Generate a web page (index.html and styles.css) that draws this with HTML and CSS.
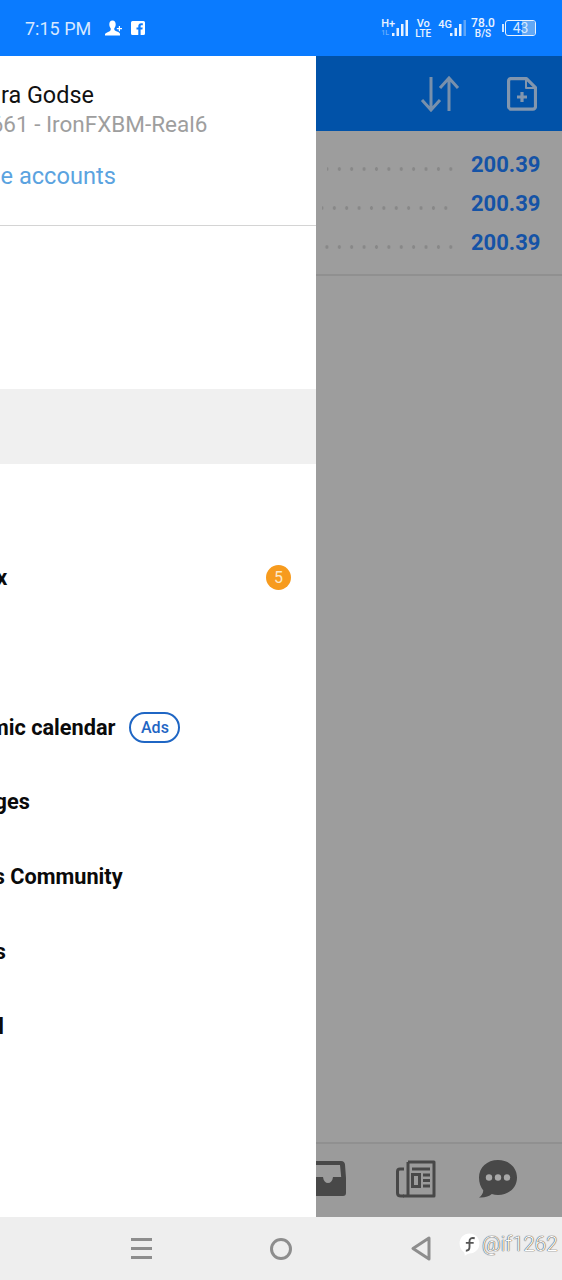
FILE: index.html
```html
<!DOCTYPE html>
<html lang="en">
<head>
  <meta charset="UTF-8">
  <meta name="viewport" content="width=device-width, initial-scale=1">
  <title>Accounts menu</title>
  <link rel="stylesheet" href="styles.css">
</head>
<body>
  <div class="screen">
    <!-- Status bar -->
    <header class="status-bar">
      <div class="status-left">
        <span class="clock">7:15 PM</span>
        <svg class="person-icon" viewBox="0 0 18 16" width="18" height="16">
          <path fill="#fff" d="M7.500 0.500c2 0 3.200 1.600 3.200 3.800 0 1.700-.6 3.100-1.400 4v1.400c0 .8 2.400 1.500 4 2.200 1 .5 1.700 1.200 1.700 2v1.600H0v-1.300c.5-1 1.500-1.500 2.500-2 1.500-.6 3.200-1.200 3.200-2.500V8.300c-.8-.9-1.400-2.300-1.400-4 0-2.200 1.200-3.800 3.200-3.800z"/>
          <path fill="#fff" d="M13.800 6h1.200v2h2v1.200h-2v2h-1.200v-2h-2V8h2z"/>
        </svg>
        <svg class="fb-icon" viewBox="0 0 14 14" width="14" height="14">
          <path fill="#fff" fill-rule="evenodd" d="M1.500 0h11A1.500 1.500 0 0 1 14 1.500v11a1.500 1.500 0 0 1-1.500 1.500H9.600V8.600h1.800l.3-2.100H9.600V5.200c0-.6.2-1 1-1h1.200V2.300c-.3 0-.9-.1-1.700-.1-1.700 0-2.800 1-2.800 2.900v1.400H5.500v2.100h1.800V14H1.500A1.500 1.500 0 0 1 0 12.500v-11A1.500 1.500 0 0 1 1.500 0z"/>
        </svg>
      </div>
      <div class="status-right">
        <div class="net net-h">
          <span class="net-top">H+</span>
          <span class="net-sub">1L</span>
        </div>
        <svg class="bars bars-first" viewBox="0 0 16 18" width="16" height="18">
          <rect x="0" y="14" width="2.500" height="3" fill="#e8f2ff"/>
          <rect x="4.500" y="9" width="2.500" height="8" fill="#e8f2ff"/>
          <rect x="9" y="5" width="2.500" height="12" fill="#e8f2ff"/>
          <rect x="13.500" y="1" width="2.500" height="16" fill="#e8f2ff"/>
        </svg>
        <div class="net net-vo">
          <span class="net-top">Vo</span>
          <span class="net-low">LTE</span>
        </div>
        <span class="net-4g">4G</span>
        <svg class="bars" viewBox="0 0 16 18" width="16" height="18">
          <rect x="0" y="14" width="2.500" height="3" fill="#e8f2ff"/>
          <rect x="4.500" y="9" width="2.500" height="8" fill="#e8f2ff"/>
          <rect x="9" y="5" width="2.500" height="12" fill="#e8f2ff"/>
          <rect x="13.500" y="1" width="2.500" height="16" fill="#5ea5f7"/>
        </svg>
        <div class="net net-speed">
          <span class="net-top">78.0</span>
          <span class="net-low">B/S</span>
        </div>
        <div class="battery">
          <span class="battery-cap"></span>
          <div class="battery-body"><span class="battery-level"></span><span class="battery-text">43</span></div>
        </div>
      </div>
    </header>

    <div class="middle">
      <!-- Drawer (slid partly off the left edge) -->
      <aside class="drawer">
        <div class="account">
          <div class="account-name">Chandra Godse</div>
          <div class="account-server">6661 - IronFXBM-Real6</div>
          <div class="account-link">Manage accounts</div>
        </div>
        <nav class="menu">
          <div class="menu-row"></div>
          <div class="menu-row"></div>
          <div class="menu-row is-active"></div>
          <div class="menu-row"></div>
          <div class="menu-row">
            <span class="menu-label">Mailbox</span>
            <span class="badge">5</span>
          </div>
          <div class="menu-row"></div>
          <div class="menu-row">
            <span class="menu-label">Economic calendar</span>
            <span class="ads">Ads</span>
          </div>
          <div class="menu-row"><span class="menu-label">Messages</span></div>
          <div class="menu-row"><span class="menu-label">Traders Community</span></div>
          <div class="menu-row"><span class="menu-label">Articles</span></div>
          <div class="menu-row"><span class="menu-label">Journal</span></div>
        </nav>
      </aside>

      <!-- App behind the dim layer -->
      <main class="app">
        <div class="toolbar">
          <svg class="swap-icon" viewBox="0 0 40 36" width="40" height="36" fill="none" stroke="#7890ac" stroke-width="3">
            <path d="M11 1v33M2 24l9 10 9-10"/>
            <path d="M29 35V2M20 12l9-10 9 10"/>
          </svg>
          <svg class="file-icon" viewBox="0 0 30 34" width="30" height="34" fill="none" stroke="#8296ae" stroke-width="3.200" stroke-linejoin="round">
            <path d="M3.500 1.600h16l9 9v19a2.500 2.500 0 0 1-2.500 2.500H3.500A2.500 2.500 0 0 1 1.600 30V4a2.500 2.500 0 0 1 1.900-2.400z"/>
            <path d="M19 2v9h9" stroke-width="2"/>
            <path d="M15 15v10M10 20h10"/>
          </svg>
        </div>
        <div class="prices">
          <div class="price-row">
            <span class="leader leader-one"></span>
            <span class="price">200.39</span>
          </div>
          <div class="price-row">
            <span class="leader leader-two"></span>
            <span class="price">200.39</span>
          </div>
          <div class="price-row">
            <span class="leader leader-three"></span>
            <span class="price">200.39</span>
          </div>
        </div>
        <div class="empty"></div>
        <div class="tabs">
          <svg class="tab-inbox" viewBox="0 0 36 36" width="36" height="36">
            <path fill="#484848" fill-rule="evenodd" d="M5 0h26a4 4 0 0 1 4 3.500L36 17v15a3 3 0 0 1-3 3H3a3 3 0 0 1-3-3V17l1-13.500A4 4 0 0 1 5 0zm1 4-1.200 12H13c.5 4 2.500 6 5 6s4.500-2 5-6h8.200L30 4z"/>
          </svg>
          <svg class="tab-news" viewBox="0 0 40 38" width="40" height="38" fill="none" stroke="#484848">
            <path stroke-width="3" stroke-linejoin="round" d="M12 2h26v34H7"/>
            <path stroke-width="3" d="M12 2v34"/>
            <path stroke-width="3" stroke-linejoin="round" d="M8 9H4c-1.500 0-2.500 1-2.500 2.500V33c0 2 1.500 3 3.500 3h3"/>
            <path stroke-width="3" d="M16 9h18"/>
            <rect x="16.500" y="14.500" width="7" height="12" stroke-width="3"/>
            <path stroke-width="3" d="M27 15h7M27 20.500h7M27 26h7"/>
          </svg>
          <svg class="tab-chat" viewBox="0 0 40 40" width="40" height="40">
            <path fill="#484848" d="M20 1c11 0 19 7.500 19 17.500S31 36 20 36c-2.200 0-4.300-.3-6.200-.9C11 37.500 6.500 39 1 38.500c2.500-1.500 4-4 4.300-7C2.600 28.200 1 23.800 1 18.500 1 8.500 9 1 20 1z"/>
            <circle cx="11" cy="18.500" r="3.200" fill="#a8a8a8"/>
            <circle cx="20" cy="18.500" r="3.200" fill="#a8a8a8"/>
            <circle cx="29" cy="18.500" r="3.200" fill="#a8a8a8"/>
          </svg>
        </div>
      </main>
    </div>

    <!-- Android navigation -->
    <footer class="nav-bar">
      <div class="nav-item">
        <div class="nav-menu"><span></span><span></span><span></span></div>
      </div>
      <div class="nav-item"><span class="nav-home"></span></div>
      <div class="nav-item">
        <svg viewBox="0 0 20 25" width="20" height="25" fill="none" stroke="#8d8d8d" stroke-width="3" stroke-linejoin="round">
          <path d="M18 2v21L2 12.500z"/>
        </svg>
      </div>
    </footer>

    <!-- Watermark -->
    <div class="watermark">
      <svg viewBox="0 0 20 22" width="21" height="23">
        <path fill="#fff" d="M10 0.500c5.300 0 9.500 4 9.500 9.500s-4.200 9.500-9.500 9.500c-1 0-2.500 .7-4.500 2.300 0-2-.3-3.300-1.300-3.900C2 16.300 0.500 13.500 0.500 10c0-5.500 4.200-9.500 9.500-9.500z"/>
        <path fill="none" stroke="#555" stroke-width="1.800" d="M15 5c-3.500-.8-5 .6-5 3v5.500c0 2.500-1 3.500-3.500 3.500M6.500 9.500H14"/>
      </svg>
      <span>@if1262</span>
    </div>
  </div>
</body>
</html>
```

FILE: styles.css
```css
* {
  box-sizing: border-box;
}

html, body {
  margin: 0;
  padding: 0;
}

body {
  font-family: Roboto, "Liberation Sans", sans-serif;
  background-color: #eeeeee;
}

.screen {
  position: relative;
  width: 562px;
  height: 1280px;
  display: flex;
  flex-direction: column;
  overflow: hidden;
}

/* status bar */
.status-bar {
  height: 56px;
  flex-shrink: 0;
  background-color: #0a7bff;
  display: flex;
  justify-content: space-between;
  align-items: center;
  padding: 0 26px 0 25px;
  color: #eaf3ff;
}

.status-left {
  display: flex;
  align-items: center;
}

.clock {
  font-size: 18px;
  color: #d6e8ff;
  margin-right: 14px;
}

.person-icon {
  margin-right: 8px;
}

.status-right {
  display: flex;
  align-items: center;
}

.net {
  display: flex;
  flex-direction: column;
  align-items: center;
  font-weight: 500;
}

.net-top {
  font-size: 11px;
  line-height: 11px;
}

.net-low {
  font-size: 10px;
  line-height: 10px;
}

.net-sub {
  font-size: 7px;
  line-height: 8px;
  color: #6db0fb;
  align-self: flex-start;
}

.net-h {
  width: 14px;
  margin-right: -3px;
  margin-top: -2px;
}

.bars-first {
  margin-right: 7px;
}

.net-vo {
  width: 16px;
  margin-right: 7px;
}

.net-4g {
  font-size: 11px;
  font-weight: 500;
  margin-right: -2px;
  margin-top: -8px;
}

.net-speed {
  width: 22px;
  margin-left: 6px;
  margin-right: 8px;
}

.net-speed .net-top {
  font-size: 12px;
}

.battery {
  display: flex;
  align-items: center;
}

.battery-cap {
  width: 2px;
  height: 8px;
  background-color: #cfe4ff;
  margin-right: 1px;
}

.battery-body {
  position: relative;
  width: 31px;
  height: 16px;
  border: 1.500px solid #e8f2ff;
  border-radius: 3px;
  display: flex;
  justify-content: center;
  align-items: center;
  font-size: 14px;
  color: #d6e8ff;
  overflow: hidden;
}

.battery-level {
  position: absolute;
  right: 0;
  top: 0;
  bottom: 0;
  width: 13px;
  background-color: #62a8f5;
}

.battery-text {
  position: relative;
}

/* main area */
.middle {
  flex: 1;
  display: flex;
  min-height: 0;
}

.drawer {
  width: 316px;
  flex-shrink: 0;
  background-color: #ffffff;
  overflow: hidden;
  display: flex;
  flex-direction: column;
}

.account {
  height: 170px;
  border-bottom: 1px solid #d4d4d4;
  padding-top: 25px;
  flex-shrink: 0;
}

.account-name,
.account-server,
.account-link {
  white-space: nowrap;
}

.account-name {
  font-size: 23.400px;
  line-height: 28px;
  color: #111111;
  margin-left: -66px;
}

.account-server {
  font-size: 22.500px;
  line-height: 28px;
  color: #9e9e9e;
  margin-left: -22px;
  margin-top: 1px;
}

.account-link {
  font-size: 23.600px;
  line-height: 28px;
  color: #5ba3e0;
  margin-left: -72px;
  margin-top: 24px;
}

.menu {
  padding-top: 13.500px;
}

.menu-row {
  height: 74.800px;
  display: flex;
  align-items: center;
  padding: 3px 25px 0 0;
}

.menu-row.is-active {
  background-color: #f0f0f0;
}

.menu-label {
  font-size: 21.700px;
  font-weight: 700;
  color: #0a0a0a;
  margin-left: -70px;
  white-space: nowrap;
}

.badge {
  margin-left: auto;
  width: 25px;
  height: 25px;
  border-radius: 50%;
  background-color: #f79b1e;
  color: #fde9c8;
  font-size: 16px;
  display: flex;
  justify-content: center;
  align-items: center;
}

.ads {
  margin-left: 14px;
  width: 51px;
  height: 31px;
  border: 2px solid #1f66c4;
  border-radius: 16px;
  color: #1f66c4;
  font-size: 16px;
  font-weight: 500;
  display: flex;
  justify-content: center;
  align-items: center;
}

/* dimmed app */
.app {
  flex: 1;
  min-width: 0;
  background-color: #9d9d9d;
  display: flex;
  flex-direction: column;
  overflow: hidden;
}

.toolbar {
  height: 75px;
  flex-shrink: 0;
  background-color: #0152a8;
  display: flex;
  justify-content: flex-end;
  align-items: center;
  padding-right: 25px;
}

.swap-icon {
  margin-right: 47px;
}

.prices {
  height: 145px;
  flex-shrink: 0;
  border-bottom: 2px solid #909090;
  padding-top: 14px;
}

.price-row {
  height: 39px;
  display: flex;
  align-items: center;
  justify-content: flex-end;
  padding-right: 23px;
}

.leader {
  height: 4px;
  margin-top: 8px;
  background-image: radial-gradient(circle, #888888 1.500px, transparent 2px);
  background-size: 12.400px 4px;
  background-position: right center;
}

.leader-one {
  width: 130px;
  margin-right: 14px;
}

.leader-two {
  width: 130px;
  margin-right: 19px;
}

.leader-three {
  width: 136px;
  margin-right: 14px;
}

.price {
  font-size: 22px;
  font-weight: 700;
  color: #1553a6;
  width: 68px;
  text-align: right;
  white-space: nowrap;
}

.empty {
  flex: 1;
}

.tabs {
  height: 75px;
  flex-shrink: 0;
  border-top: 2px solid #909090;
  background-color: #9b9b9b;
  display: flex;
  justify-content: flex-end;
  align-items: center;
  padding: 0 44px 4px 0;
}

.tabs svg {
  flex-shrink: 0;
}

.tab-inbox {
  margin-right: 50px;
}

.tab-news {
  margin-right: 42px;
}

/* bottom nav */
.nav-bar {
  height: 63px;
  flex-shrink: 0;
  background-color: #eeeeee;
  display: grid;
  grid-template-columns: repeat(3, 140px);
  justify-content: center;
}

.nav-item {
  display: flex;
  justify-content: center;
  align-items: center;
}

.nav-menu {
  width: 21px;
  display: flex;
  flex-direction: column;
  gap: 6px;
}

.nav-menu span {
  display: block;
  height: 3px;
  background-color: #8d8d8d;
}

.nav-home {
  width: 22px;
  height: 22px;
  border: 3px solid #8d8d8d;
  border-radius: 50%;
}

.watermark {
  position: absolute;
  left: 459px;
  top: 1232px;
  display: flex;
  align-items: center;
  gap: 2px;
  color: #ffffff;
  font-size: 20.500px;
  font-weight: 300;
  text-shadow: 0 0 1px #333333, 0 0 1px #333333;
}
```
